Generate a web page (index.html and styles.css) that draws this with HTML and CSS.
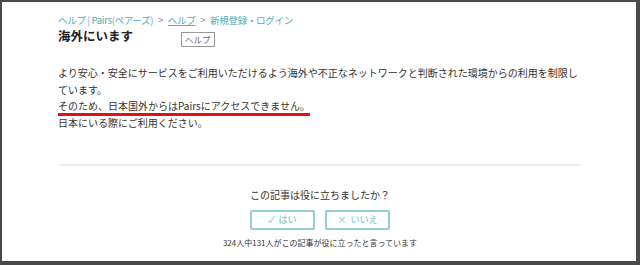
FILE: index.html
```html
<!DOCTYPE html>
<html lang="ja">
<head>
<meta charset="utf-8">
<link rel="stylesheet" href="styles.css">
</head>
<body>
<div class="frame">
  <div class="content">
    <nav class="crumbs">
      <span>ヘルプ | Pairs(ペアーズ)</span>
      <span class="sep">&gt;</span>
      <span class="u">ヘルプ</span>
      <span class="sep">&gt;</span>
      <span>新規登録・ログイン</span>
    </nav>
    <div class="title-row">
      <h1 class="title">海外にいます</h1>
      <span class="tip">ヘルプ</span>
    </div>
    <div class="body">
      <p>より安心・安全にサービスをご利用いただけるよう海外や不正なネットワークと判断された環境からの利用を制限しています。</p>
      <p><span class="mark">そのため、日本国外からはPairsにアクセスできません。</span></p>
      <p>日本にいる際にご利用ください。</p>
    </div>
    <hr class="rule">
    <div class="vote">
      <div class="q">この記事は役に立ちましたか？</div>
      <div class="btns">
        <span class="btn">✓&nbsp; はい</span>
        <span class="btn">×&nbsp; いいえ</span>
      </div>
      <div class="stat">324人中131人がこの記事が役に立ったと言っています</div>
    </div>
  </div>
</div>
</body>
</html>
```
FILE: styles.css
```css
html, body { margin: 0; padding: 0; background: #4a4a4a; }
body { width: 640px; height: 265px; overflow: hidden; font-family: "Noto Sans CJK JP", "Liberation Sans", sans-serif; }
.frame {
  box-sizing: border-box;
  width: 640px; height: 265px;
  border-top: 2px solid #4a4a4a;
  border-left: 2px solid #4a4a4a;
  border-right: 4px solid #4a4a4a;
  border-bottom: 4px solid #4a4a4a;
  background: #fff;
}
.content { padding: 11px 0 0 56px; width: 522px; }
.crumbs { font-size: 9.5px; color: #4fadb3; line-height: 14px; white-space: nowrap; letter-spacing: -0.3px; }
.crumbs .sep { color: #888; margin: 0 3px; }
.crumbs .u { text-decoration: underline; }
.title-row { display: flex; align-items: flex-start; height: 22px; }
.title { font-size: 12.5px; font-weight: bold; color: #222; margin: 0; line-height: 17px; }
.tip { margin: 5px 0 0 48px; border: 1px solid #999; font-size: 8.5px; color: #666; padding: 1px 3px; line-height: 11px; background: #fff; }
.body { margin-top: 16px; font-size: 10px; color: #333; line-height: 16.5px; width: 527px; }
.body p { margin: 0; }
.mark { text-decoration: underline; text-decoration-color: #e0101a; text-decoration-thickness: 3px; text-underline-offset: 3px; }
.rule { border: 0; height: 2px; background: #ececec; margin: 33px 0 0 2px; width: 520px; }
.vote { text-align: center; margin-left: 2px; width: 520px; }
.q { margin-top: 22px; font-size: 10px; color: #333; line-height: 14px; }
.btns { display: flex; justify-content: center; gap: 10px; margin-top: 8px; }
.btn { box-sizing: border-box; width: 65px; height: 20px; border: 2px solid #8fd0d3; border-radius: 2px; color: #6bbfc3; font-size: 9px; line-height: 16px; }
.stat { margin-top: 8px; font-size: 8px; color: #333; line-height: 10px; }
```
